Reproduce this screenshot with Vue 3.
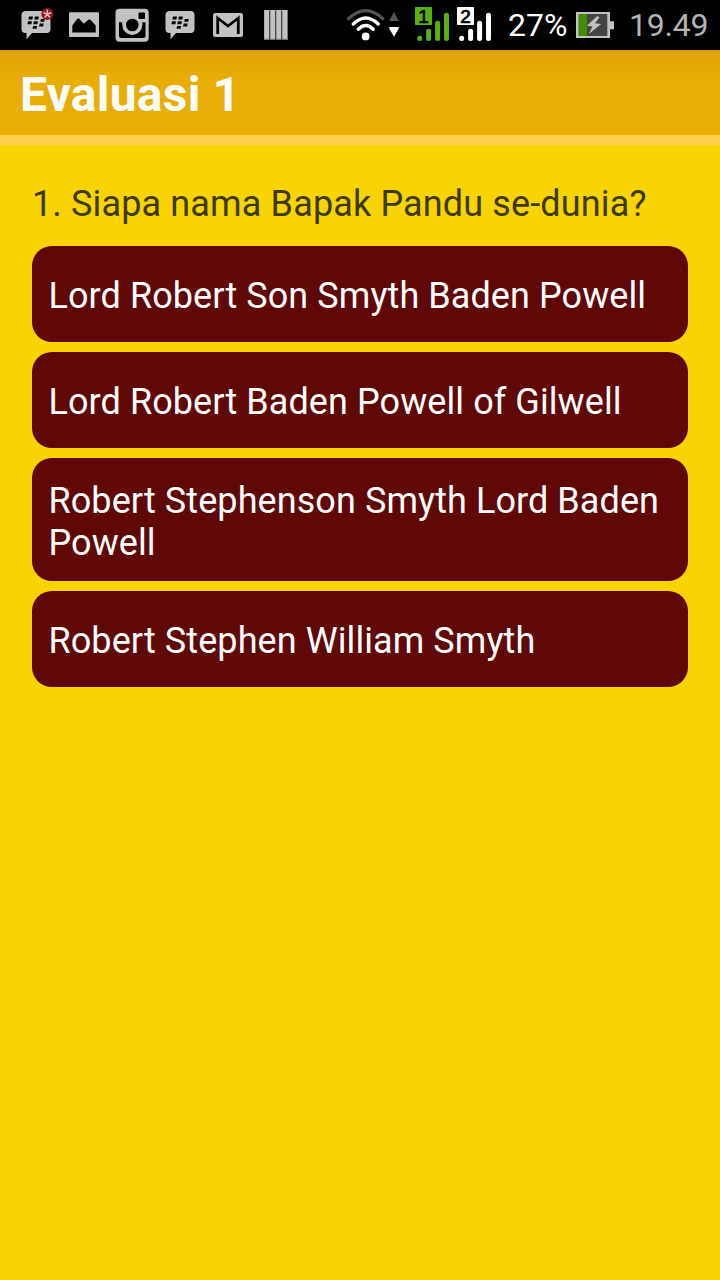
<template>
  <div class="screen">
    <div class="status-bar">
      <div class="notifications">
        <svg v-for="(badge, i) in [true, false]" :key="i" class="icon" :class="badge ? 'bbm-first' : 'bbm-second'" viewBox="0 0 48 50">
          <path class="fill" d="M14 11h20.500a4 4 0 0 1 4 4v14a4 4 0 0 1-4 4H20l-5.500 6.200V33H13.500a4 4 0 0 1-4-4V15a4 4 0 0 1 4.500-4z" />
          <path class="cut" d="M17 16.500h4l-.6 2.900h-4zM22.900 16.500h4l-.6 2.900h-4zM28.800 18.900h4l-.6 2.900h-4zM16 21.300h4l-.6 2.900h-4zM21.900 21.300h4l-.6 2.900h-4zM27.700 23.600h4l-.6 2.900h-4zM21.200 25.900h4l-.6 2.900h-4z" />
          <g v-if="badge">
            <circle cx="35.300" cy="14" r="6" fill="#8c1d1f" />
            <path d="M35.300 14V9.800M35.300 14l4-1.300M35.300 14l2.500 3.500M35.300 14l-2.500 3.500M35.300 14l-4-1.300" stroke="#e6b5b5" stroke-width="1.500" />
          </g>
        </svg>
        <svg class="icon picture" viewBox="0 0 48 50">
          <rect class="fill" x="9" y="12.300" width="30" height="24.700" rx="1" />
          <path class="cut" d="M12.300 32.500v-7l5.200-7 1.500 0 4.700 5.200 5-4.200h1.500l5.500 6v7z" />
        </svg>
        <svg class="icon camera" viewBox="0 0 48 50">
          <rect class="fill" x="7.500" y="8.700" width="33.200" height="33" rx="4" />
          <path class="cut" d="M11 22.300h26.500V36a2 2 0 0 1-2 2H13a2 2 0 0 1-2-2z" />
          <path class="fill" d="M14.300 22h20v3h-20z" />
          <circle class="fill" cx="24.300" cy="25" r="10" />
          <circle class="cut" cx="24.300" cy="25" r="6.300" />
          <rect class="cut" x="30.500" y="12.500" width="6.500" height="6.500" rx="1" />
        </svg>
        <svg class="icon gmail" viewBox="0 0 48 50">
          <rect class="fill" x="9" y="13" width="30" height="24" rx="2.500" />
          <path d="M13.700 34V18L24 26 34.300 18v16" fill="none" stroke="#000" stroke-width="2.800" />
        </svg>
        <svg class="icon bars" viewBox="0 0 48 50">
          <rect x="12" y="10" width="24" height="30" fill="#777" />
          <path class="fill" d="M12.300 10h4.700v28.800h-4.700zM18.300 10h4.700v28.800h-4.700zM24.300 10h4.700v28.800h-4.700zM30.300 10h4.700v28.800h-4.700z" />
          <path d="M17.700 11v29M23.700 11v29M29.700 11v29" stroke="#222" stroke-width=".7" />
        </svg>
      </div>
      <div class="system">
        <svg class="wifi" viewBox="0 0 54 50">
          <g fill="none" stroke-linecap="round">
            <path d="M2.500 18.700Q19.700 2.500 36.800 18.700" stroke="#555" stroke-width="3.200" />
            <path d="M7.300 24Q19.700 12 32.200 24" stroke="#fff" stroke-width="3.400" />
            <path d="M12.300 29.200Q19.700 21.700 27.200 29.200" stroke="#fff" stroke-width="3.400" />
          </g>
          <circle cx="19.700" cy="36.400" r="3.900" fill="#fff" />
          <path d="M48 11.800l4.700 9.200h-9.400z" fill="#555" />
          <path d="M43.300 27h9.400v1.500L48 36.800l-4.700-8.300z" fill="#fff" />
        </svg>
        <svg v-for="sim in sims" :key="sim.slot" class="sim" viewBox="0 0 34 50">
          <rect y="7" width="17" height="18" rx=".7" :fill="sim.color" />
          <text x="8.500" y="22.800" text-anchor="middle">{{ sim.slot }}</text>
          <g :stroke="sim.color" stroke-width="5" stroke-linecap="round">
            <path d="M4.700 38.300v.2M13.600 31.300v7.200M22.600 23.300v15.200M31.500 15.300v23.200" />
          </g>
        </svg>
        <span class="percent">27%</span>
        <svg class="battery" viewBox="0 0 38 50">
          <path class="fill" d="M0 12h34v9.300h4v8h-4V38H0z" />
          <rect x="2.700" y="14" width="28.600" height="22" fill="#444" />
          <rect x="2.700" y="14" width="8.300" height="22" fill="#438b00" />
          <path class="fill" d="M21.300 16l-10.500 9.700 5.700.8-3.800 7.500 12.500-10-6.200-.8 4.500-6z" />
        </svg>
        <span class="clock">19.49</span>
      </div>
    </div>

    <header class="title-bar">
      <h1>Evaluasi 1</h1>
    </header>

    <main class="quiz">
      <p class="question">1. Siapa nama Bapak Pandu se-dunia?</p>
      <button v-for="answer in answers" :key="answer" class="answer">{{ answer }}</button>
    </main>
  </div>
</template>

<script setup>
const sims = [
  { slot: 1, color: '#5ab010' },
  { slot: 2, color: '#fff' }
];

const answers = [
  'Lord Robert Son Smyth Baden Powell',
  'Lord Robert Baden Powell of Gilwell',
  'Robert Stephenson Smyth Lord Baden Powell',
  'Robert Stephen William Smyth'
];
</script>

<style>
body {
  margin: 0;
  background-color: #f9d403;
}
</style>

<style scoped>
.screen {
  min-height: 1280px;
  background-color: #f9d403;
  font-family: Roboto, "Liberation Sans", sans-serif;
}
.status-bar {
  display: flex;
  justify-content: space-between;
  height: 50px;
  padding: 0 12px;
  background-color: #000;
}
.notifications, .system {
  display: flex;
}
.icon {
  width: 48px;
  height: 50px;
}
.picture, .camera {
  order: 1;
}
.bbm-second {
  order: 2;
}
.gmail, .bars {
  order: 3;
}
.fill {
  fill: #c2c2c2;
}
.cut {
  fill: #000;
}
.wifi {
  width: 54px;
  height: 50px;
  margin-right: 15px;
}
.sim {
  width: 34px;
  height: 50px;
  margin-right: 8px;
}
.sim text {
  font: 19px "Liberation Sans", sans-serif;
  fill: #000;
  stroke: #000;
  stroke-width: .7px;
}
.percent, .clock {
  line-height: 50px;
  font-size: 32px;
  white-space: nowrap;
}
.percent {
  width: 59px;
  margin-left: 9px;
  color: #fff;
}
.battery {
  width: 38px;
  height: 50px;
  margin: 0 15px 0 9px;
}
.clock {
  width: 79px;
  letter-spacing: -.2px;
  color: #b4b4b4;
}
.title-bar {
  display: flex;
  align-items: center;
  height: 82px;
  padding: 3px 0 0 20px;
  border-bottom: 10px solid #fdd04a;
  background: linear-gradient(#d19b09, #e0a607 4px, #e8ae05 30px);
}
.title-bar h1 {
  margin: 0;
  font-size: 48px;
  font-weight: bold;
  letter-spacing: .25px;
  color: #fff;
}
.quiz {
  display: flex;
  flex-direction: column;
  gap: 10px;
  padding: 38px 32px 0;
}
.question {
  margin: 0 0 11px;
  font-size: 36px;
  line-height: 42px;
  letter-spacing: .14px;
  color: #3d3a10;
}
.answer {
  min-height: 96px;
  padding: 21.500px 15px 17.500px 16.500px;
  border: none;
  border-radius: 20px;
  background-color: #5f0806;
  color: #fff;
  font-family: inherit;
  font-size: 36px;
  line-height: 42px;
  letter-spacing: .08px;
  text-align: left;
}
</style>
